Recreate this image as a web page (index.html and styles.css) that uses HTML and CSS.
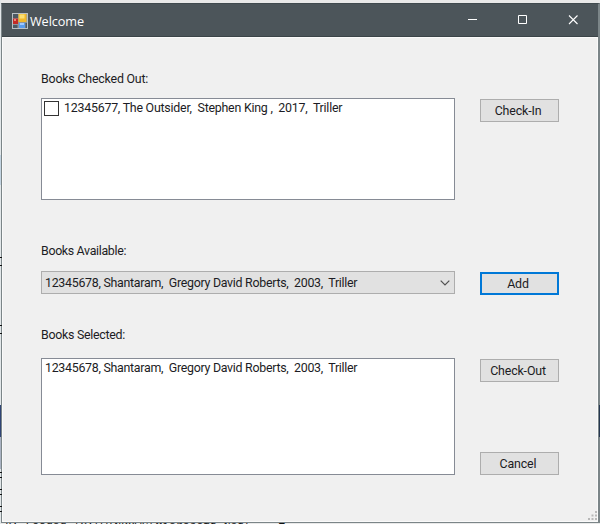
FILE: index.html
```html
<!DOCTYPE html>
<html lang="en">
<head>
<meta charset="utf-8">
<title>Welcome</title>
<link rel="stylesheet" href="styles.css">
</head>
<body>
<div class="desktop">
  <div class="edge">
    <i class="strip sky"></i><i class="strip navy"></i><i class="strip steel"></i>
    <i class="glyph g1"></i><i class="glyph g2"></i><i class="glyph g3"></i><i class="glyph g4"></i><i class="glyph g5"></i>
  </div>
  <i class="edge-right"></i>
  <main class="window">
    <header class="titlebar">
      <svg class="app-icon" width="16" height="16" viewBox="0 0 16 16">
        <rect x=".5" y=".5" width="15" height="15" fill="#8c969e" stroke="#b9c0c4"/>
        <rect x="1" y="1" width="5" height="4" fill="#4d5963"/>
        <rect x="1" y="5.5" width="5" height="5.5" fill="#c32b26"/>
        <rect x="2" y="6" width="2" height="2" fill="#ee8275"/>
        <rect x="1" y="12" width="4.5" height="3" fill="#4d5963"/>
        <rect x="6.5" y="1" width="8" height="8" fill="#f0b82b"/>
        <rect x="7.5" y="1.5" width="5" height="4" fill="#fbdf72"/>
        <rect x="7" y="10" width="6" height="5" fill="#5a9cec"/>
        <rect x="8" y="10" width="4" height="2" fill="#a1caff"/>
        <rect x="13.5" y="10" width="1.5" height="5" fill="#4d5963"/>
      </svg>
      <h1 class="title">Welcome</h1>
      <svg class="controls" width="110" height="12" viewBox="0 0 110 12" fill="none" stroke="#fff">
        <path d="M0 5.5H9"/>
        <path d="M50.5 1.5h8v8h-8z"/>
        <path d="M101 1.5l8.5 8.5M109.5 1.5l-8.5 8.5" stroke-width="1.1"/>
      </svg>
    </header>
    <section class="form">
      <div class="row out">
        <div class="field">
          <div class="label">Books Checked Out:</div>
          <div class="list list-out"><i class="checkbox"></i><span class="item item-checked">12345677, The Outsider,  Stephen King ,  2017,  Triller</span></div>
        </div>
        <div class="button b-in"><span>Check-In</span></div>
      </div>
      <div class="row available">
        <div class="field">
          <div class="label label-tight">Books Available:</div>
          <div class="combo"><span class="item">12345678, Shantaram,  Gregory David Roberts,  2003,  Triller</span>
            <svg class="chevron" width="10" height="6" viewBox="0 0 10 6" fill="none" stroke="#505050" stroke-width="1.2"><path d="M.7 .7L5 5 9.3 .7"/></svg>
          </div>
        </div>
        <div class="button b-add"><span>Add</span></div>
      </div>
      <div class="row selected">
        <div class="field">
          <div class="label label-tall">Books Selected:</div>
          <div class="list list-selected"><span class="item">12345678, Shantaram,  Gregory David Roberts,  2003,  Triller</span></div>
        </div>
        <div class="actions">
          <div class="button"><span>Check-Out</span></div>
          <div class="button"><span>Cancel</span></div>
        </div>
      </div>
    </section>
    <svg class="grip" width="9" height="9" viewBox="0 0 9 9" fill="#b8b8b8"><path d="M7 0h2v2H7zM3.5 3.5h2v2h-2zM7 3.5h2v2H7zM0 7h2v2H0zM3.5 7h2v2h-2zM7 7h2v2H7z"/></svg>
  </main>
  <div class="console">k: Loaded 'C:\WINDOWS\Microsoft.Net\..  ■</div>
</div>
</body>
</html>
```
FILE: styles.css
```css
* { box-sizing: border-box; }
body { margin: 0; background: #e9e9e9; }
.desktop {
  position: relative;
  width: 600px;
  height: 524px;
  padding: 3px 0 0 1px;
  overflow: hidden;
  font: 12.4px/16px Roboto, "Liberation Sans", sans-serif;
  color: #1c1c24;
}
.window {
  position: relative;
  width: 599px;
  height: 520px;
  background: #f0f0f0;
  border: 1px solid #7b8588;
  border-top-color: #404a4e;
  border-right-width: 2px;
  box-shadow: inset 1px 0 #fafafa, inset -1px 0 #fafafa, inset 0 -1px #fafafa;
}
.titlebar {
  display: flex;
  align-items: center;
  height: 33px;
  padding: 0 20px 0 10px;
  background: #4c555a;
  border-bottom: 1px solid #3b4448;
  box-shadow: 0 1px #fafafa;
}
.app-icon { margin-top: 1px; }
.title {
  margin: 2px auto 0 2px;
  font: 12.7px/18px "Open Sans", sans-serif;
  letter-spacing: -.1px;
  color: #fff;
}
.controls { margin-top: -1px; }
.form { padding: 34px 0 0 39px; }
.row { display: flex; gap: 25px; }
.field { width: 414px; }
.label { height: 27px; letter-spacing: -.2px; white-space: pre; }
.label-tight { height: 28px; letter-spacing: -.33px; }
.label-tall { height: 31px; letter-spacing: -.28px; }
.item { white-space: pre; letter-spacing: -.28px; }
.item-checked { letter-spacing: -.23px; margin-top: 1px; }
.list { display: flex; align-items: flex-start; background: #fff; border: 1px solid #868b95; }
.list-out { height: 102px; padding: 0 3px 0 2px; }
.checkbox { width: 15px; height: 15px; margin: 2px 5px 0 0; border: 1px solid #333; background: #fff; }
.combo {
  display: flex;
  align-items: center;
  justify-content: space-between;
  height: 23px;
  padding: 1px 4px 0 3px;
  background: #e1e1e1;
  border: 1px solid #adadad;
}
.list-selected { height: 117px; padding: 1px 3px; }
.button {
  display: flex;
  align-items: center;
  justify-content: center;
  width: 79px;
  height: 23px;
  padding: 1px 3px 0 0;
  background: #e1e1e1;
  border: 1px solid #adadad;
  letter-spacing: -.15px;
}
.b-in { margin-top: 28px; }
.b-add { margin-top: 29px; border: 2px solid #0078d7; }
.available { margin-top: 43px; }
.selected { margin-top: 32px; }
.actions { display: flex; flex-direction: column; justify-content: space-between; padding-top: 32px; }
.grip { position: absolute; right: 1px; bottom: 2px; }
.console {
  height: 3px;
  margin-top: -2px;
  padding-left: 4px;
  overflow: hidden;
  white-space: pre;
  font: 11.4px/11px "Liberation Mono", monospace;
  color: #111;
}
.edge { position: absolute; left: 0; top: 0; width: 1px; height: 524px; background: #e2e7e9; }
.edge-right { position: absolute; right: 0; top: 405px; width: 1px; height: 32px; background: #253750; z-index: 1; }
.strip { position: absolute; left: 0; width: 1px; }
.sky { top: 155px; height: 30px; background: #c3d4e2; }
.navy { top: 405px; height: 32px; background: #304575; }
.steel { top: 437px; height: 32px; background: #a9b2c2; }
.glyph { position: absolute; left: 0; width: 2px; z-index: 2; border-top: 1px solid #111; border-bottom: 1px solid #111; }
.g1 { top: 257px; height: 9px; }
.g2 { top: 325px; height: 9px; }
.g3 { top: 472px; height: 6px; }
.g4 { top: 489px; height: 6px; }
.g5 { top: 506px; height: 6px; }
```
